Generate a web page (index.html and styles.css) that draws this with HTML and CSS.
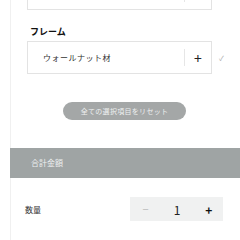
FILE: index.html
```html
<!DOCTYPE html>
<html lang="ja">
<head>
    <meta charset="UTF-8">
    <meta name="viewport" content="width=device-width, initial-scale=1.0">
    <title>フレーム選択</title>
    <link rel="stylesheet" href="styles.css">
</head>
<body>
    <div class="options">
        <div class="option-row option-row-cut">
            <div class="select-box">
                <span class="select-name"></span>
                <span class="select-add"></span>
            </div>
        </div>

        <div class="option">
            <div class="option-label">フレーム</div>
            <div class="option-row">
                <div class="select-box">
                    <span class="select-name">ウォールナット材</span>
                    <span class="select-add">+</span>
                </div>
                <span class="select-check">&#10003;</span>
            </div>
        </div>

        <div class="reset-area">
            <button class="reset-btn">全ての選択項目をリセット</button>
        </div>
    </div>

    <div class="total-bar">合計金額</div>

    <div class="quantity">
        <span class="quantity-label">数量</span>
        <div class="stepper">
            <span class="stepper-minus">&minus;</span>
            <span class="stepper-value">1</span>
            <span class="stepper-plus">+</span>
        </div>
    </div>
</body>
</html>
```

FILE: styles.css
```css
/* Base */
body {
    margin: 0;
    padding: 0;
    background: #fff;
    color: #222;
    font-family: "Noto Sans CJK JP", "Noto Sans", sans-serif;
    width: 240px;
    height: 240px;
    overflow: hidden;
}

/* Options panel */
.options {
    display: flow-root;
    margin-left: 10px;
    border-left: 1px solid #f0f0f0;
    padding-left: 16px;
    height: 148px;
}

.option-row {
    display: flex;
    align-items: center;
}

.option-row-cut {
    margin-top: -23px;
}

.select-box {
    width: 183px;
    height: 31px;
    border: 1px solid #e3e3e3;
    display: flex;
    align-items: center;
}

.select-name {
    flex: 1;
    padding-left: 15px;
    font-size: 8px;
    letter-spacing: 0.5px;
    color: #333;
}

.select-add {
    width: 26px;
    height: 17px;
    border-left: 1px solid #e6e6e6;
    display: flex;
    align-items: center;
    justify-content: center;
    font-size: 14px;
    line-height: 1;
    color: #222;
}

.select-check {
    margin-left: 7px;
    font-size: 7px;
    color: #aaa;
}

.option-label {
    margin-top: 16px;
    margin-bottom: 3px;
    padding-left: 3px;
    font-size: 9px;
    font-weight: bold;
    line-height: 12px;
    color: #111;
}

/* Reset */
.reset-area {
    display: flex;
    padding-top: 28px;
    padding-left: 36px;
}

.reset-btn {
    width: 123px;
    height: 18px;
    border: none;
    border-radius: 9px;
    background: #a4a7a7;
    color: #eef0f0;
    font-family: inherit;
    font-size: 7px;
    letter-spacing: 0.3px;
    padding: 0;
}

/* Total */
.total-bar {
    margin-left: 10px;
    height: 30px;
    background: #9fa4a4;
    color: #eef0f0;
    font-size: 8px;
    line-height: 30px;
    padding-left: 21px;
}

/* Quantity */
.quantity {
    margin-left: 10px;
    border-left: 1px solid #f0f0f0;
    height: 62px;
    display: flex;
    align-items: center;
    padding-left: 14px;
}

.quantity-label {
    flex: 1;
    font-size: 8px;
    color: #333;
    margin-top: 1px;
}

.stepper {
    width: 93px;
    height: 24px;
    margin-right: 17px;
    background: #f0f1f1;
    display: flex;
    align-items: center;
    justify-content: space-around;
}

.stepper-minus {
    font-size: 11px;
    color: #bbb;
}

.stepper-value {
    font-size: 12px;
    color: #222;
}

.stepper-plus {
    font-size: 12px;
    font-weight: bold;
    color: #111;
    margin-right: -2px;
}
```
